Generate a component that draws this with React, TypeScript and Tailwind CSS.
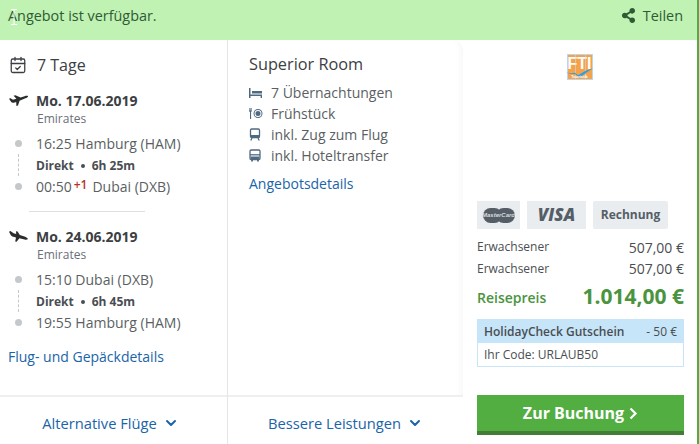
import { CalendarCheck, ChevronDown } from "lucide-react";
import { FaShareAlt } from "react-icons/fa";

const link = "text-[#1a64a8]";

function PlaneUp() {
  return (
    <svg width="19" height="11" viewBox="0 0 19 11">
      <path fill="#2a2c2e" d="M0 3.800 1.600 3.200 4 4.700 7.400 3.700 4.600 .7 6.400 .2 11.600 2.600 15.500 1.200C17 .7 18.600.6 19 1.100 19.200 1.800 18 2.600 16.400 3.300L10.600 5.800 9 10.500 7.400 11 7.200 6.900 4.800 7.700C3.600 8 2.800 7.700 2.200 7Z" />
    </svg>
  );
}

function PlaneDown() {
  return (
    <svg width="19" height="11" viewBox="0 0 19 11">
      <path fill="#2a2c2e" d="M0 .8 1.400 0 4.600 2.200 7.200 3 7 .2 8.600.4 10.800 4 15.500 5.600C17.200 6.200 18.800 7.200 18.800 8 18.600 8.800 17 8.800 15.600 8.400L10.400 7.300 7.600 10.800 6.200 10.600 7 6.500 3.400 5.400C2.400 5 1.600 4 1.200 3Z" />
    </svg>
  );
}

function Leg({ from, stop, to, plus }: { from: string; stop: string; to: string; plus?: boolean }) {
  return (
    <div className="relative mt-[7px] pl-[28px] text-[14px] text-[#5b5f63]">
      <div className="absolute left-[7px] top-[7px] h-[7px] w-[7px] rounded-full bg-[#c5c8ca]" />
      <div className="absolute left-[10px] top-[21px] h-[22px] border-l border-dashed border-[#c5c8ca]" />
      <div className="absolute left-[7px] top-[50px] h-[7px] w-[7px] rounded-full bg-[#c5c8ca]" />
      <div className="h-[22px] leading-[22px]">{from}</div>
      <div className="flex h-[21px] items-center gap-[7px] text-[12px] font-bold leading-[21px] text-[#4a4e52]">
        <span>Direkt</span>
        <span className="h-[4px] w-[4px] rounded-full bg-[#4a4e52]" />
        <span>{stop}</span>
      </div>
      <div className="h-[21px] leading-[21px]">
        {plus ? (
          <>
            00:50
            <span className="relative -top-[3px] ml-[2px] mr-[5px] text-[12px] font-semibold text-[#b8321f]">+1</span>
            Dubai (DXB)
          </>
        ) : (
          to
        )}
      </div>
    </div>
  );
}

function Flight({ date, icon, from, stop, to, plus }: { date: string; icon: React.ReactNode; from: string; stop: string; to: string; plus?: boolean }) {
  return (
    <div>
      <div className="flex h-[20px] items-center">
        <div className="flex w-[29px] shrink-0 pl-px">{icon}</div>
        <span className="-ml-px text-[14px] font-bold text-[#3c4043]">{date}</span>
      </div>
      <div className="h-[16px] pl-[29px] pt-px text-[12px] leading-[16px] text-[#6a7077]">Emirates</div>
      <Leg from={from} stop={stop} to={to} plus={plus} />
    </div>
  );
}

const ic = "#4f6a80";

function Bed() {
  return (
    <svg width="13" height="10" viewBox="0 0 13 10" fill={ic}><path d="M0 0h1.500v10H0zM3 3h10v2.500H3zM1.500 6.500H13V10h-1.400V8H1.500z" /></svg>
  );
}
function Food() {
  return (
    <svg width="14" height="11" viewBox="0 0 14 11" fill={ic}>
      <path d="M0 0h.6v2.500h.5V0h.6v2.500h.5V0h.6v3.200l-.7.8V11H1V4L0 3.200zM9 1a4.500 4.500 0 1 1 0 9 4.500 4.500 0 0 1 0-9zm0 1a3.500 3.500 0 1 0 0 7 3.500 3.500 0 0 0 0-7zm0 1a2.500 2.500 0 1 1 0 5 2.500 2.500 0 0 1 0-5z" />
    </svg>
  );
}
function Train() {
  return (
    <svg width="12" height="13" viewBox="0 0 12 13" fill="none" stroke={ic} strokeWidth="1.300">
      <rect x="1.500" y="1" width="9" height="8.500" rx="1.200" />
      <path d="M1.600 7h8.800v2.500H1.600z" fill={ic} stroke="none" />
      <path d="M3 10l-1.200 2.500M9 10l1.200 2.500" />
    </svg>
  );
}
function Bus() {
  return (
    <svg width="12" height="13" viewBox="0 0 12 13" fill="none" stroke={ic} strokeWidth="1.300">
      <rect x="1" y="1" width="10" height="9.500" rx="1.200" />
      <path d="M1 5.800h10" />
      <path d="M1.600 7.500h8.800v2.700H1.600z" fill={ic} stroke="none" />
      <path d="M3 11v1.600M9 11v1.600" strokeWidth="1.800" />
    </svg>
  );
}

function Extra({ icon, text }: { icon: React.ReactNode; text: string }) {
  return (
    <div className="flex h-[21px] items-center text-[14px] text-[#5b5f63]">
      <span className="flex w-[22px] shrink-0 items-center">{icon}</span>
      {text}
    </div>
  );
}

function FtiLogo() {
  return (
    <div className="relative h-[26px] w-[26px] border border-[#b9d7ee] bg-[#f6a24a]">
      <div className="pt-[1px] text-center font-['Liberation_Sans',sans-serif] text-[16px] font-bold leading-[15px] text-white">FTI</div>
      <div className="absolute left-[7px] top-0 h-full w-px bg-[#cfd9e6]/60" />
      <div className="absolute left-[17px] top-0 h-full w-px bg-[#cfd9e6]/60" />
      <svg width="30" height="12" viewBox="0 0 30 12" className="absolute -left-[3px] top-[11px]">
        <path d="M1 6.500c4 .8 7 .8 9 .3l3 2.500 6-3.600c3-1.600 6-2.600 9-3.200-3.500 2-7 4.400-10 6.600L14.500 11.500 10 8C7 8 4 7.600 1 6.500z" fill="#2a9fe0" />
      </svg>
      <div className="absolute bottom-0 left-0 right-0 text-center font-['Liberation_Sans',sans-serif] text-[4px] font-bold leading-[4px] text-white">Touristik</div>
    </div>
  );
}

export default function App() {
  return (
    <div className="flex h-[444px] w-[699px] flex-col overflow-hidden border-r-2 border-[#4fae3f] bg-white font-['Open_Sans',sans-serif]">
      <div className="relative flex h-[40px] shrink-0 items-center justify-between bg-[#bff2b3] pb-[8px] pl-[8px] pr-[14px] text-[14.4px] text-[#2f5a33]">
        <span>Angebot ist verfügbar.</span>
        <span className="flex items-center gap-[7px]">
          <FaShareAlt className="text-[15px] text-[#2f5a33]" />
          Teilen
        </span>
        <svg width="7" height="16" viewBox="0 0 7 16" className="absolute left-[11px] top-[9px]" fill="none" stroke="#fff" strokeWidth="1"><path d="M0 .5h6M3 .5v15M0 15.500h6" /></svg>
      </div>

      <div className="flex min-h-0 flex-1">
        <div className="flex w-[228px] shrink-0 flex-col border-r border-[#e3e7ea]">
          <div className="h-[357px] shrink-0 border-b-[2px] border-[#edeff1] pl-[8px] pt-[13px]">
            <div className="flex h-[24px] items-center">
              <span className="w-[29px] shrink-0 pl-px"><CalendarCheck size={18} strokeWidth={1.700} color="#3c4043" /></span>
              <span className="text-[16px] text-[#3c4043]">7 Tage</span>
            </div>
            <div className="mt-[13px]">
              <Flight date="Mo. 17.06.2019" icon={<PlaneUp />} from="16:25 Hamburg (HAM)" stop="6h 25m" to="" plus />
            </div>
            <div className="ml-[21px] mt-[14px] h-px w-[116px] bg-[#dcdfe1]" />
            <div className="mt-[14px]">
              <Flight date="Mo. 24.06.2019" icon={<PlaneDown />} from="15:10 Dubai (DXB)" stop="6h 45m" to="19:55 Hamburg (HAM)" />
            </div>
            <div className={`mt-[14px] text-[14px] leading-[20px] ${link}`}>Flug- und Gepäckdetails</div>
          </div>
          <div className={`flex flex-1 items-center justify-center gap-[6px] pr-[6px] pt-[5px] text-[14.700px] ${link}`}>
            <span>Alternative Flüge</span>
            <ChevronDown size={16} strokeWidth={3} />
          </div>
        </div>

        <div className="flex w-[235px] shrink-0 flex-col">
          <div className="h-[357px] shrink-0 rounded-tr-[10px] border-b-[2px] border-[#edeff1] pl-[21px] pt-[12px] shadow-[inset_-8px_0_8px_-8px_#f0f1f2]">
            <div className="h-[24px] text-[16.300px] leading-[24px] text-[#3c4043]">Superior Room</div>
            <div className="mt-[6px]">
              <Extra icon={<Bed />} text="7 Übernachtungen" />
              <Extra icon={<Food />} text="Frühstück" />
              <Extra icon={<Train />} text="inkl. Zug zum Flug" />
              <Extra icon={<Bus />} text="inkl. Hoteltransfer" />
            </div>
            <div className={`mt-[8px] text-[14px] leading-[20px] ${link}`}>Angebotsdetails</div>
          </div>
          <div className={`flex flex-1 items-center justify-center gap-[6px] pt-[5px] text-[14.700px] ${link}`}>
            <span>Bessere Leistungen</span>
            <ChevronDown size={16} strokeWidth={3} />
          </div>
        </div>

        <div className="flex-1 pl-[14px] pr-[13px] pt-[14px]">
          <div className="flex justify-center pr-[2px]"><FtiLogo /></div>
          <div className="mt-[121px] flex gap-[7px]">
            <div className="flex h-[28px] w-[43px] items-center justify-center bg-[#e9edf0]">
              <div className="relative flex h-[15px] w-[32px] items-center justify-center">
                <div className="absolute left-0 h-[15px] w-[19px] rounded-full bg-[#555e66]" />
                <div className="absolute right-0 h-[15px] w-[19px] rounded-full bg-[#555e66]" />
                <span className="relative font-['Liberation_Sans',sans-serif] text-[6px] font-bold italic text-[#d8dcdf]">MasterCard</span>
              </div>
            </div>
            <div className="flex h-[28px] w-[59px] items-center justify-center bg-[#e9edf0] text-[17px] font-extrabold italic text-[#555e66]">VISA</div>
            <div className="flex h-[28px] w-[75px] items-center justify-center rounded-[2px] bg-[#e9edf0] text-[12px] font-bold text-[#555e66]">Rechnung</div>
          </div>
          <div className="mt-[7px] flex h-[22px] items-center justify-between text-[#4a4e52]">
            <span className="text-[12px]">Erwachsener</span>
            <span className="text-[14px]">507,00 €</span>
          </div>
          <div className="flex h-[21px] items-center justify-between text-[#4a4e52]">
            <span className="text-[12px]">Erwachsener</span>
            <span className="text-[14px]">507,00 €</span>
          </div>
          <div className="mt-[3px] flex h-[30px] items-center justify-between text-[#4a9440]">
            <span className="text-[14px] font-semibold">Reisepreis</span>
            <span className="text-[21px] font-bold">1.014,00 €</span>
          </div>
          <div className="mt-[7px] border border-[#c6e5f9] text-[12px] text-[#4a4e52]">
            <div className="flex h-[23px] items-center justify-between bg-[#c6e5f9] pl-[6px] pr-[6px] font-semibold">
              <span>HolidayCheck Gutschein</span>
              <span className="font-normal">- 50 €</span>
            </div>
            <div className="flex h-[23px] items-center pl-[6px]">Ihr Code: URLAUB50</div>
          </div>
          <button className="mt-[28px] flex h-[40px] w-[207px] items-center justify-center gap-[5px] border-b-4 border-[#447d37] bg-[#52ae41] text-[16px] font-bold text-white">
            Zur Buchung
            <svg width="9" height="13" viewBox="0 0 9 13" fill="none" stroke="#fff" strokeWidth="2.200"><path d="M1.500 1.500l5 5-5 5" /></svg>
          </button>
        </div>
      </div>
    </div>
  );
}
